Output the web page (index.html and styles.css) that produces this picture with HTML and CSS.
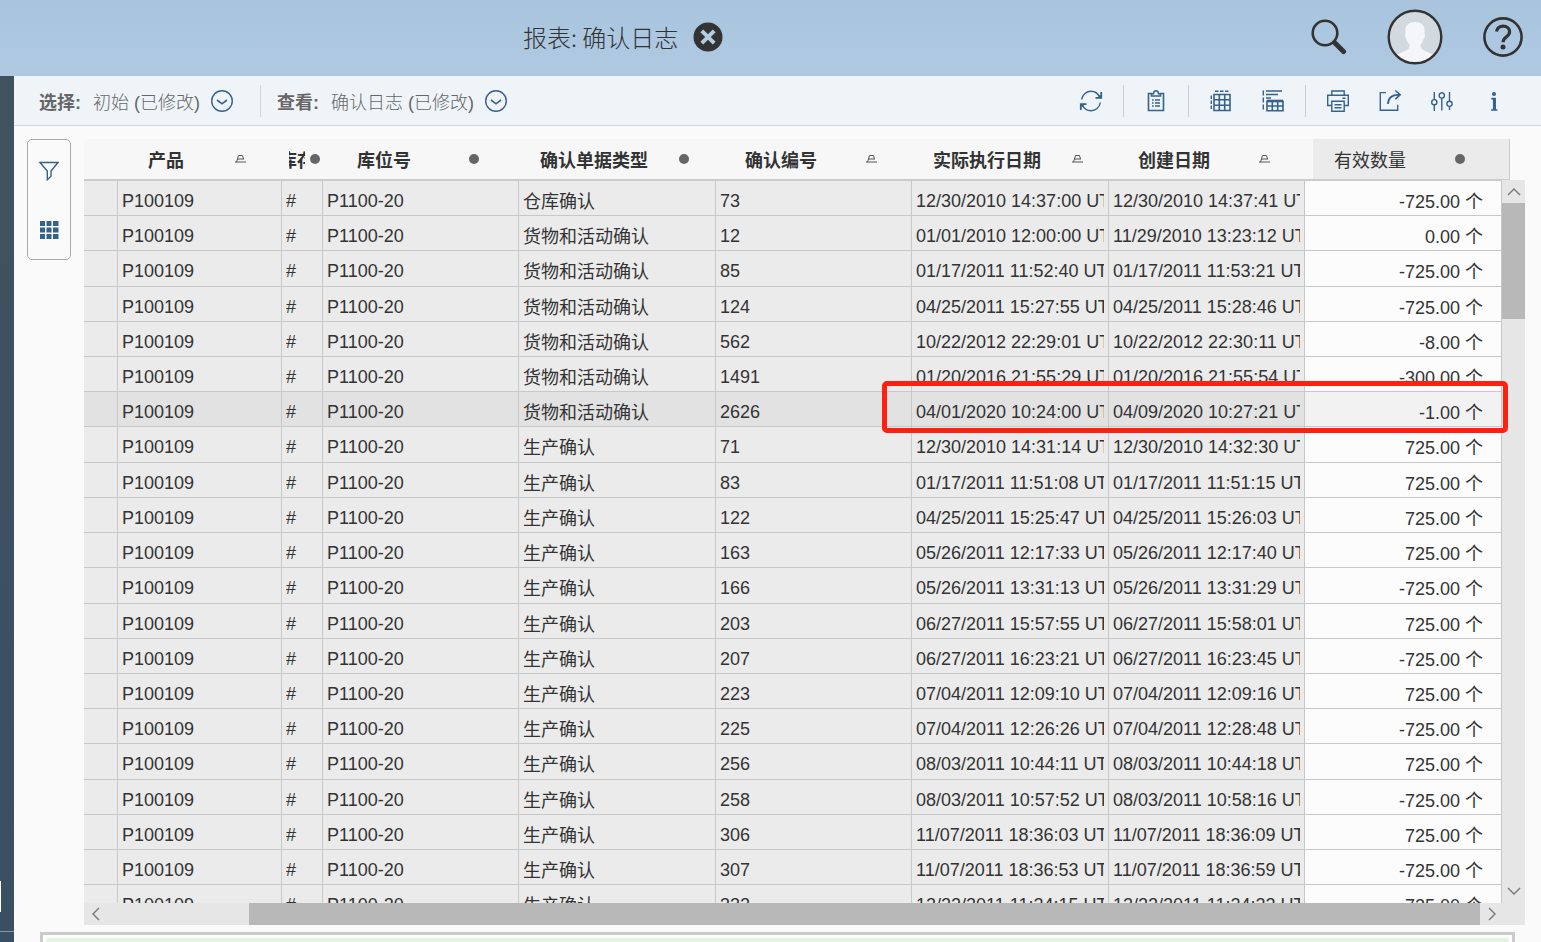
FILE: index.html
```html
<!DOCTYPE html>
<html lang="zh-CN">
<head>
<meta charset="utf-8">
<title>报表: 确认日志</title>
<link rel="stylesheet" href="styles.css">
</head>
<body>
<div class="page">
  <header class="shell">
    <div class="shell-title">
      <h1>报表: 确认日志</h1>
      <button class="icon-btn close" aria-label="关闭">
        <svg width="30" height="30" viewBox="0 0 30 30"><circle cx="15" cy="15" r="14.5" fill="#333"/><path d="M8.800 8.800l12.400 12.400M21.200 8.800L8.800 21.200" stroke="#b4cce2" stroke-width="4"/></svg>
      </button>
    </div>
    <div class="shell-actions">
      <button class="icon-btn" aria-label="搜索">
        <svg width="36" height="36" viewBox="0 0 36 36" fill="none" stroke="#333"><circle cx="14" cy="14" r="12.300" stroke-width="2.600"/><path d="M23 23l2 2" stroke-width="3"/><path d="M24.500 24.500l8 8" stroke-width="5" stroke-linecap="round"/></svg>
      </button>
      <button class="icon-btn" aria-label="用户">
        <svg width="56" height="56" viewBox="0 0 56 56"><clipPath id="face"><circle cx="28" cy="28" r="26"/></clipPath><circle cx="28" cy="28" r="26" fill="#d2d9df"/><path clip-path="url(#face)" d="M28 13c6 0 9.600 3 9.600 8.500 0 2-.2 3 .4 4.500.4 2-.8 3-1.400 4-.8 3-2 4.500-3 5.500-.5 4 1.400 5 4.400 6.500 4 1.700 7 2.500 9 5V56H9V47c2-2.500 5-3.300 9-5 3-1.500 4.900-2.500 4.400-6.500-1-1-2.200-2.500-3-5.500-.6-1-1.800-2-1.400-4 .6-1.500.4-2.500.4-4.500C18.400 16 22 13 28 13z" fill="#f4f6f9"/><circle cx="28" cy="28" r="26.300" fill="none" stroke="#333" stroke-width="2.400"/></svg>
      </button>
      <button class="icon-btn" aria-label="帮助">
        <svg width="40" height="40" viewBox="0 0 40 40" fill="none" stroke="#333"><circle cx="20" cy="20" r="18.600" stroke-width="2.600"/><path d="M13.500 14.500c.8-3.700 3.300-5.300 6.600-5.300 3.800 0 6.500 2.200 6.500 5.500 0 2.700-1.600 4-3.500 5.400-2 1.500-3 2.500-3 5.200" stroke-width="3.200"/><circle cx="20" cy="30" r="2.500" fill="#333" stroke="none"/></svg>
      </button>
    </div>
  </header>
  <div class="body">
    <aside class="rail"><i class="rail-handle"></i></aside>
    <main class="main">
      <div class="toolbar">
        <div class="pick"><b>选择:</b><span>初始 (已修改)</span>
          <button class="icon-btn" aria-label="选择菜单"><svg width="24" height="24" viewBox="0 0 24 24" fill="none" stroke="#34628d" stroke-width="1.400"><circle cx="12" cy="12" r="10.300"/><path d="M7 11l5 3.800 5-3.800" stroke-width="1.600"/></svg></button>
        </div>
        <div class="pick"><b>查看:</b><span>确认日志 (已修改)</span>
          <button class="icon-btn" aria-label="查看菜单"><svg width="24" height="24" viewBox="0 0 24 24" fill="none" stroke="#34628d" stroke-width="1.400"><circle cx="12" cy="12" r="10.300"/><path d="M7 11l5 3.800 5-3.800" stroke-width="1.600"/></svg></button>
        </div>
        <div class="tools">
          <button class="tool refresh" aria-label="刷新"><svg viewBox="0 0 24 24"><path d="M2.600 10.500C3.500 5.500 7.500 2.300 12 2.300c4 0 7 2 8.800 6M21.400 13.500c-.9 5-4.900 8.200-9.400 8.200-4 0-7-2-8.800-6"/><path d="M22.200 3v5.800h-5.700M22.200 8.600l-3-2.500M1.800 21v-5.800h5.700M1.800 15.400l3 2.500" stroke-width="1.800"/></svg></button>
          <button class="tool clip" aria-label="剪贴板"><svg viewBox="0 0 24 24"><path d="M8 4.500H4.500v17h15v-17H16M7.500 7V4.800h2C9.600 3 10.500 1.800 12 1.800S14.400 3 14.500 4.800h2V7z" stroke-width="1.600"/><path d="M8 11h1.600M8 14h1.600M8 17h1.600M11 11h5M11 14h5M11 17h5"/></svg></button>
          <button class="tool grid" aria-label="表格"><svg viewBox="0 0 24 24"><path d="M5 5.500h16v16H5zM10.300 5.500v16M15.700 5.500v16M5 10.800h16M5 16.200h16" stroke-width="1.600"/><path d="M6 2.300h14M2.300 6.500v14" stroke-dasharray="3.500 1.500"/></svg></button>
          <button class="tool chart" aria-label="图表和表格"><svg viewBox="0 0 24 24"><path d="M5 2h16M5 5.500h12M5 9h5" stroke-width="1.600"/><path d="M2.300 1.500v20" stroke-dasharray="5 2"/><path d="M6 12.300h16v9.500H6zM11.300 12v10M16.700 12v10M6 17h16" stroke-width="1.600"/><path d="M6 12h16" stroke-width="2.600"/></svg></button>
          <button class="tool print" aria-label="打印"><svg viewBox="0 0 24 24"><path d="M5.800 6V2h12.400v4M5.800 16.500H1.700V6.200h20.600v10.300h-4.100M5.800 12.300h12.400v9.900H5.800zM8.500 15.700h7M8.500 18.700h7M16.500 9.200h3"/></svg></button>
          <button class="tool share" aria-label="导出"><svg viewBox="0 0 24 24"><path d="M8 3.600H2.300v17.600h17.400v-5.500"/><path d="M10 15c0-6 4-9.400 11.800-9.400M17.300 1.500l4.900 4.200-4.900 4.500" stroke-width="1.600"/></svg></button>
          <button class="tool adjust" aria-label="设置"><svg viewBox="0 0 24 24"><path d="M4.300 3v7.500M4.300 16v6M11.800 3v1M11.800 9v12.500M19.500 3v9M19.500 17.500v3.500"/><circle cx="4.300" cy="13.200" r="2.600"/><circle cx="11.800" cy="6.500" r="2.600"/><circle cx="19.500" cy="14.800" r="2.600"/></svg></button>
          <button class="tool info" aria-label="信息"><svg viewBox="0 0 24 24"><circle cx="12" cy="5" r="2" fill="#34628d" stroke="none"/><path d="M9.300 9.700h3.400v10.800M9 21h6.400" stroke-width="1.700"/><path d="M12.400 9v12" stroke-width="3"/></svg></button>
        </div>
      </div>
      <div class="work">
        <div class="side-tools">
          <button class="icon-btn" aria-label="过滤器"><svg width="20" height="20" viewBox="0 0 20 20" fill="none" stroke="#34628d" stroke-width="1.400"><path d="M1 1.500h18L12 10v5.200L8.300 18.700V10z"/></svg></button>
          <button class="icon-btn" aria-label="网格"><svg width="20" height="20" viewBox="0 0 20 20" fill="#34628d"><path d="M1 1h5v5H1zM7.500 1h5v5h-5zM14 1h5.500v5H14zM1 7.500h5v5H1zM7.500 7.500h5v5h-5zM14 7.500h5.500v5H14zM1 14h5v5H1zM7.500 14h5v5h-5zM14 14h5.500v5H14z"/></svg></button>
        </div>
        <div class="table-frame">
          <table class="log">
            <thead>
              <tr>
                <th class="narrow"><span>产品</span><svg class="sort" viewBox="0 0 11 8"><path d="M3.500.5h4M2 4h7M0 7h11M3.500.5L2.500 4 1.500 7M7.500.5l1 3.500"/></svg></th>
                <th class="tiny"><span><em>库存</em></span><i class="dot"></i></th>
                <th><span>库位号</span><i class="dot"></i></th>
                <th><span>确认单据类型</span><i class="dot"></i></th>
                <th><span>确认编号</span><svg class="sort" viewBox="0 0 11 8"><path d="M3.500.5h4M2 4h7M0 7h11M3.500.5L2.500 4 1.500 7M7.500.5l1 3.500"/></svg></th>
                <th><span>实际执行日期</span><svg class="sort" viewBox="0 0 11 8"><path d="M3.500.5h4M2 4h7M0 7h11M3.500.5L2.500 4 1.500 7M7.500.5l1 3.500"/></svg></th>
                <th><span>创建日期</span><svg class="sort" viewBox="0 0 11 8"><path d="M3.500.5h4M2 4h7M0 7h11M3.500.5L2.500 4 1.500 7M7.500.5l1 3.500"/></svg></th>
                <th class="measure"><span>有效数量</span><i class="dot"></i></th>
              </tr>
            </thead>
            <tbody id="rows"></tbody>
          </table>
          <div class="vbar">
            <button class="icon-btn" aria-label="向上"><svg width="14" height="8" viewBox="0 0 14 8"><path d="M1 7l6-6 6 6"/></svg></button>
            <div class="vthumb"></div>
            <button class="icon-btn" aria-label="向下"><svg width="14" height="8" viewBox="0 0 14 8"><path d="M1 1l6 6 6-6"/></svg></button>
          </div>
          <div class="hbar">
            <button class="icon-btn" aria-label="向左"><svg width="8" height="14" viewBox="0 0 8 14"><path d="M7 1L1 7l6 6"/></svg></button>
            <div class="hthumb"></div>
            <button class="icon-btn" aria-label="向右"><svg width="8" height="14" viewBox="0 0 8 14"><path d="M1 1l6 6-6 6"/></svg></button>
          </div>
          <div class="marker"></div>
        </div>
      </div>
      <div class="message"><div class="message-fill"></div></div>
    </main>
  </div>
</div>
<script src="script.js"></script>
</body>
</html>
```
FILE: styles.css
```css
* { box-sizing: border-box; }

body {
  margin: 0;
  font-family: "Liberation Sans", "Noto Sans CJK SC", sans-serif;
  font-size: 18px;
  color: #333;
  background: #fafafa;
}

button {
  font: inherit;
  border: 0;
  padding: 0;
  background: none;
}

.icon-btn { display: flex; align-items: center; justify-content: center; }

.page {
  height: 100vh;
  display: flex;
  flex-direction: column;
  overflow: hidden;
}

/* Shell header */
.shell {
  flex: none;
  height: 76px;
  display: grid;
  grid-template-columns: 47% 1fr;
  align-items: start;
  background: linear-gradient(#a9c5de, #afc9e1);
}
.shell-title {
  justify-self: end;
  display: flex;
  align-items: center;
  gap: 15px;
  height: 74px;
  padding-right: 1px;
}
.shell-title h1 {
  margin: 0;
  font-family: "Noto Sans CJK SC", sans-serif;
  font-size: 24px;
  line-height: 36px;
  font-weight: 300;
  white-space: nowrap;
}
.shell-actions {
  justify-self: end;
  display: flex;
  align-items: center;
  gap: 40px;
  height: 74px;
  padding-right: 18px;
}

.body { flex: 1; min-height: 0; display: flex; }
.rail {
  flex: none;
  width: 14px;
  display: flex;
  flex-direction: column;
  justify-content: flex-end;
  background: linear-gradient(#41525f, #3b4f63);
}
.rail-handle {
  height: 51px;
  border-bottom: 1px solid #8b959e;
  margin-bottom: 10px;
  background: linear-gradient(#fff, #fff) 0 0 / 1px 31px no-repeat;
}

.main {
  flex: 1;
  min-width: 0;
  display: flex;
  flex-direction: column;
}

/* Toolbar */
.toolbar {
  flex: none;
  height: 50px;
  display: flex;
  align-items: center;
  padding-left: 25px;
  background: #eff4f9;
  border-bottom: 1px solid #c9dae9;
  color: #666;
}
.pick {
  display: flex;
  align-items: center;
  height: 32px;
  white-space: nowrap;
}
.pick + .pick {
  margin-left: 26px;
  padding-left: 16px;
  border-left: 1px solid #cfd5dc;
}
.pick b, .pick span { line-height: 24px; padding-top: 4px; }
.pick span { margin: 0 10px 0 12px; font-weight: 300; }
.tools {
  margin-left: auto;
  padding-right: 35px;
  display: flex;
  align-items: center;
}
.tool {
  display: flex;
  align-items: center;
  height: 32px;
  margin-left: 28px;
}
.tool svg {
  width: 24px;
  height: 24px;
  fill: none;
  stroke: #34628d;
  stroke-width: 1.4px;
}
.clip, .grid, .print {
  margin-left: 20px;
  padding-left: 20px;
  border-left: 1px solid #c6ced6;
}

/* Work area */
.work {
  flex: 1;
  min-height: 0;
  display: flex;
  align-items: flex-start;
  gap: 13px;
  padding: 13px 16px 7px 13px;
}
.side-tools {
  flex: none;
  width: 44px;
  height: 121px;
  display: flex;
  flex-direction: column;
  align-items: center;
  gap: 39px;
  padding-top: 21px;
  border: 1px solid #aaa;
  border-radius: 5px;
}

.table-frame {
  flex: 1;
  min-width: 0;
  align-self: stretch;
  position: relative;
  display: grid;
  grid-template-columns: minmax(0, 1fr) 23px;
  grid-template-rows: 41px minmax(0, 1fr) 22px;
}
.log {
  grid-area: 1 / 1 / 3 / 3;
  min-height: 0;
  display: flex;
  flex-direction: column;
}
.log thead {
  flex: none;
  display: block;
  height: 42px;
  margin-right: 15px;
  background: #f7f7f7;
  border-bottom: 2px solid #cbcbcb;
}
.log thead tr {
  display: grid;
  height: 40px;
  grid-template-columns: 188fr 55fr 210fr 187fr 206fr 187fr 196fr 197fr;
}
.log th {
  min-width: 0;
  padding: 0;
  display: flex;
  align-items: center;
  line-height: 28px;
}
.log th span {
  width: 114px;
  padding-top: 4px;
  text-align: center;
  white-space: nowrap;
}
.log th .dot, .log th .sort { margin-left: 28px; }
.log th.narrow span { width: 164px; }
.log th.narrow .sort { margin-left: -13px; }
.log th.tiny span {
  width: 16px;
  margin-left: 17px;
  overflow: hidden;
  display: flex;
  justify-content: center;
}
.log th.tiny em { font-style: normal; }
.log th.tiny .dot { margin-left: 5px; }
.log th.measure {
  background: #ebebeb;
  border-right: 1px solid #cbcbcb;
  font-weight: 400;
}
.dot {
  flex: none;
  width: 10px;
  height: 10px;
  border-radius: 50%;
  background: #666;
}
.sort {
  flex: none;
  width: 11px;
  height: 8px;
  fill: none;
  stroke: #555;
}

.log tbody {
  flex: 1;
  min-height: 0;
  display: block;
  overflow: hidden;
  margin-right: 23px;
}
.log tbody tr {
  display: grid;
  height: 35px;
  grid-template-columns: 34fr 164fr 41fr 196fr 197fr 196fr 197fr 196fr 197fr;
}
.log tbody tr:nth-child(9n + 3),
.log tbody tr:nth-child(9n + 8) { height: 36px; }
.log td {
  min-width: 0;
  padding: 7px 4px 0;
  line-height: 26px;
  background: #ebebeb;
  border-right: 1px solid #c8c8c8;
  border-bottom: 1px solid #c8c8c8;
}
.log td span {
  display: block;
  height: 26px;
  overflow: hidden;
  white-space: nowrap;
}
.log td:nth-child(5) { padding-top: 8px; }
.log td.num {
  padding: 8px 18px 0 4px;
  text-align: right;
  background: #fcfcfc;
}
.log tr.selected td { background: #e2e2e2; }
.log tr.selected td.num { background: #f2f2f2; }

/* Scrollbars */
.vbar svg, .hbar svg { fill: none; stroke: #777; stroke-width: 1.4px; }
.vbar {
  grid-area: 2 / 2 / 4 / 3;
  display: grid;
  grid-template-rows: 23px 116px minmax(0, 1fr) 24px 22px;
  background: #e6e6e6;
}
.vbar button:last-child { grid-row: 4; }
.vthumb, .hthumb { background: #b8b8b8; }
.hbar {
  grid-area: 3 / 1 / 4 / 3;
  display: grid;
  grid-template-columns: 24px 141fr 1231fr 23px 22px;
  background: #e6e6e6;
}
.hthumb { grid-column: 3; }

.marker {
  position: absolute;
  top: 242px;
  right: 17px;
  left: 55.4%;
  height: 52px;
  border: 5px solid #ff2010;
  border-radius: 5px;
}

.message {
  flex: none;
  height: 10px;
  margin: 0 26px;
  padding: 3px 3px 0;
  border: 3px solid #cbcbcb;
  border-bottom: 0;
  background: #fff;
}
.message-fill { height: 4px; background: #e3f4e0; border-radius: 3px 3px 0 0; }
```
FILE: script.js
```js
const WAREHOUSE = "仓库确认";
const GOODS = "货物和活动确认";
const PRODUCTION = "生产确认";

const entries = [
  [WAREHOUSE, "73", "12/30/2010 14:37:00", "12/30/2010 14:37:41", "-725.00"],
  [GOODS, "12", "01/01/2010 12:00:00", "11/29/2010 13:23:12", "0.00"],
  [GOODS, "85", "01/17/2011 11:52:40", "01/17/2011 11:53:21", "-725.00"],
  [GOODS, "124", "04/25/2011 15:27:55", "04/25/2011 15:28:46", "-725.00"],
  [GOODS, "562", "10/22/2012 22:29:01", "10/22/2012 22:30:11", "-8.00"],
  [GOODS, "1491", "01/20/2016 21:55:29", "01/20/2016 21:55:54", "-300.00"],
  [GOODS, "2626", "04/01/2020 10:24:00", "04/09/2020 10:27:21", "-1.00"],
  [PRODUCTION, "71", "12/30/2010 14:31:14", "12/30/2010 14:32:30", "725.00"],
  [PRODUCTION, "83", "01/17/2011 11:51:08", "01/17/2011 11:51:15", "725.00"],
  [PRODUCTION, "122", "04/25/2011 15:25:47", "04/25/2011 15:26:03", "725.00"],
  [PRODUCTION, "163", "05/26/2011 12:17:33", "05/26/2011 12:17:40", "725.00"],
  [PRODUCTION, "166", "05/26/2011 13:31:13", "05/26/2011 13:31:29", "-725.00"],
  [PRODUCTION, "203", "06/27/2011 15:57:55", "06/27/2011 15:58:01", "725.00"],
  [PRODUCTION, "207", "06/27/2011 16:23:21", "06/27/2011 16:23:45", "-725.00"],
  [PRODUCTION, "223", "07/04/2011 12:09:10", "07/04/2011 12:09:16", "725.00"],
  [PRODUCTION, "225", "07/04/2011 12:26:26", "07/04/2011 12:28:48", "-725.00"],
  [PRODUCTION, "256", "08/03/2011 10:44:11", "08/03/2011 10:44:18", "725.00"],
  [PRODUCTION, "258", "08/03/2011 10:57:52", "08/03/2011 10:58:16", "-725.00"],
  [PRODUCTION, "306", "11/07/2011 18:36:03", "11/07/2011 18:36:09", "725.00"],
  [PRODUCTION, "307", "11/07/2011 18:36:53", "11/07/2011 18:36:59", "-725.00"],
  [PRODUCTION, "332", "12/22/2011 11:24:15", "12/22/2011 11:24:22", "725.00"]
];

document.getElementById("rows").innerHTML = entries.map(([type, id, done, created, qty]) => {
  const cells = ["", "P100109", "#", "P1100-20", type, id, done + " UTC", created + " UTC"];
  return `<tr${id === "2626" ? ' class="selected"' : ""}>` +
    cells.map(text => `<td><span>${text}</span></td>`).join("") +
    `<td class="num"><span>${qty} 个</span></td></tr>`;
}).join("");
```
